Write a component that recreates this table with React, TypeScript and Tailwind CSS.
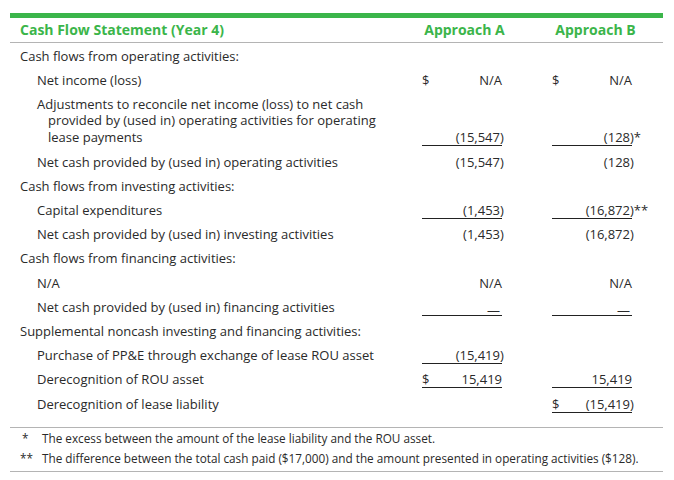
import React from "react";

type Cell = {
  v?: string;
  dollar?: boolean;
  line?: boolean;
  close?: boolean;
  note?: string;
  dash?: boolean;
};

type Row = {
  label: React.ReactNode;
  level: 0 | 1;
  multi?: boolean;
  a?: Cell;
  b?: Cell;
};

const rows: Row[] = [
  { label: "Cash flows from operating activities:", level: 0 },
  {
    label: "Net income (loss)",
    level: 1,
    a: { v: "N/A", dollar: true },
    b: { v: "N/A", dollar: true },
  },
  {
    label: (
      <>
        Adjustments to reconcile net income (loss) to net cash
        <br />
        provided by (used in) operating activities for operating
        <br />
        lease payments
      </>
    ),
    level: 1,
    multi: true,
    a: { v: "(15,547", close: true, line: true },
    b: { v: "(128", close: true, line: true, note: "*" },
  },
  {
    label: "Net cash provided by (used in) operating activities",
    level: 1,
    a: { v: "(15,547", close: true },
    b: { v: "(128", close: true },
  },
  { label: "Cash flows from investing activities:", level: 0 },
  {
    label: "Capital expenditures",
    level: 1,
    a: { v: "(1,453", close: true, line: true },
    b: { v: "(16,872", close: true, line: true, note: "**" },
  },
  {
    label: "Net cash provided by (used in) investing activities",
    level: 1,
    a: { v: "(1,453", close: true },
    b: { v: "(16,872", close: true },
  },
  { label: "Cash flows from financing activities:", level: 0 },
  { label: "N/A", level: 1, a: { v: "N/A" }, b: { v: "N/A" } },
  {
    label: "Net cash provided by (used in) financing activities",
    level: 1,
    a: { dash: true, line: true },
    b: { dash: true, line: true },
  },
  { label: "Supplemental noncash investing and financing activities:", level: 0 },
  {
    label: "Purchase of PP&E through exchange of lease ROU asset",
    level: 1,
    a: { v: "(15,419", close: true, line: true },
  },
  {
    label: "Derecognition of ROU asset",
    level: 1,
    a: { v: "15,419", dollar: true, line: true },
    b: { v: "15,419", line: true },
  },
  {
    label: "Derecognition of lease liability",
    level: 1,
    b: { v: "(15,419", dollar: true, close: true, line: true },
  },
];

function Amount({ c }: { c?: Cell }) {
  if (!c) return <div className="w-[80px]" />;
  return (
    <div
      className={`w-[80px] flex justify-between items-end ${
        c.line ? "border-b border-[#222] mb-[-1px]" : ""
      }`}
    >
      <span>{c.dollar ? "$" : ""}</span>
      <span className="whitespace-nowrap">
        {c.dash ? (
          <span className="inline-block translate-y-[3px] mr-[2px]">—</span>
        ) : (
          c.v
        )}
        {c.close && (
          <span className="inline-block w-[2px] whitespace-nowrap">
            ){c.note}
          </span>
        )}
      </span>
    </div>
  );
}

export default function App() {
  return (
    <div className="w-[674px] h-[480px] bg-white font-['Open_Sans',sans-serif] text-[#2a2a2a] pt-[13px]">
      <div className="ml-[10px] w-[653px] border-t-[5px] border-[#3bb54a]">
        {/* header */}
        <div className="flex items-center h-[25px] border-b border-[#b4b4b4] text-[14px] font-bold text-[#3bb54a] leading-[16px] whitespace-nowrap">
          <div className="w-[412px] pl-[10px]">Cash Flow Statement (Year 4)</div>
          <div className="w-[80px] flex justify-center pl-[5px]">Approach A</div>
          <div className="w-[50px]" />
          <div className="w-[80px] flex justify-center pl-[7px]">Approach B</div>
        </div>

        {/* body */}
        <div className="text-[13px] leading-[16px] pt-[0.5px] pb-[11px]">
          {rows.map((r, i) => (
            <div key={i} className="flex items-end py-[4.1px]">
              <div
                className={`w-[412px] ${
                  r.level === 0 ? "pl-[10px]" : "pl-[38px] indent-[-11px]"
                } ${r.multi ? "leading-[16.5px]" : ""}`}
              >
                {r.label}
              </div>
              <Amount c={r.a} />
              <div className="w-[50px]" />
              <Amount c={r.b} />
            </div>
          ))}
        </div>

        {/* footnotes */}
        <div className="border-t border-b border-[#b4b4b4] text-[11.75px] leading-[14px] pb-[3px]">
          <div className="flex py-[3px]">
            <span className="w-[32px] pl-[12px]">*</span>
            <span>The excess between the amount of the lease liability and the ROU asset.</span>
          </div>
          <div className="flex py-[3px]">
            <span className="w-[32px] pl-[10px]">**</span>
            <span>
              The difference between the total cash paid ($17,000) and the amount presented in
              operating activities ($128).
            </span>
          </div>
        </div>
      </div>
    </div>
  );
}
